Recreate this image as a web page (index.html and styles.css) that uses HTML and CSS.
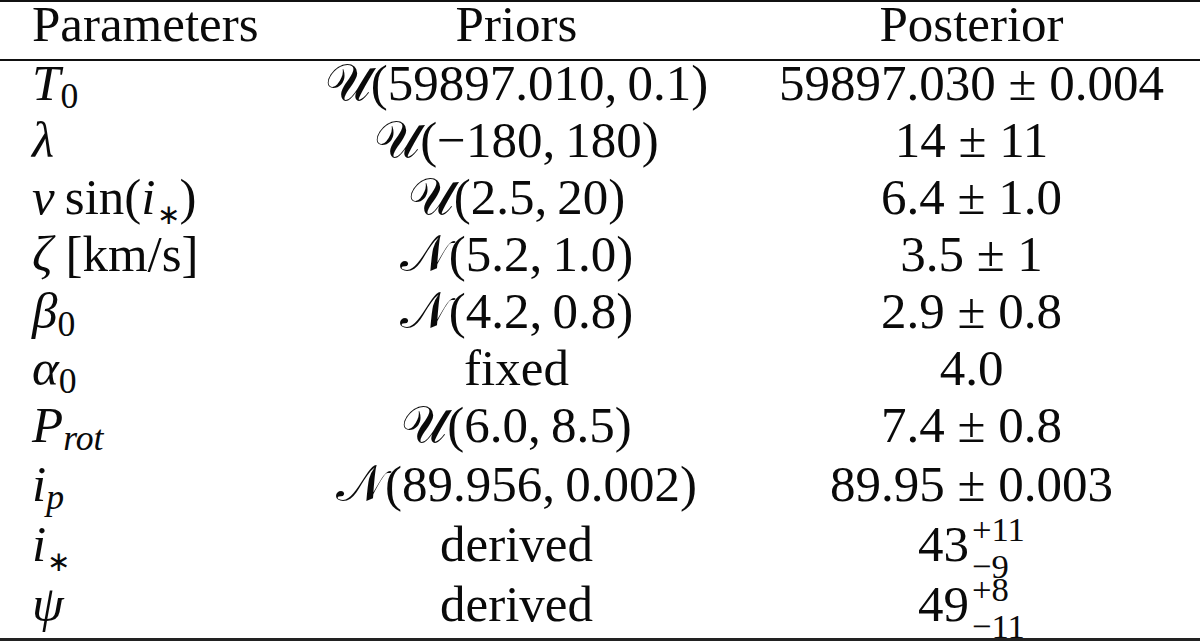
FILE: index.html
```html
<!DOCTYPE html>
<html lang="en">
  <head>
    <meta charset="UTF-8" />
    <meta name="viewport" content="width=device-width, initial-scale=1.0" />
    <title>Parameters</title>
    <link rel="stylesheet" href="styles.css">
  </head>
  <body>
    <table class="params">
      <colgroup>
        <col class="col-name">
        <col class="col-prior">
        <col class="col-post">
      </colgroup>
      <thead>
        <tr>
          <th class="name">Parameters</th>
          <th>Priors</th>
          <th>Posterior</th>
        </tr>
      </thead>
      <tbody>
        <tr>
          <td class="name"><i>T</i><sub>0</sub></td>
          <td><span class="cal">𝒰</span>(59897.010,&thinsp;0.1)</td>
          <td>59897.030 ± 0.004</td>
        </tr>
        <tr>
          <td class="name"><i>λ</i></td>
          <td><span class="cal">𝒰</span>(−180,&thinsp;180)</td>
          <td>14 ± 11</td>
        </tr>
        <tr>
          <td class="name"><i>v</i>&thinsp;sin(<i>i</i><sub class="star">∗</sub>)</td>
          <td><span class="cal">𝒰</span>(2.5,&thinsp;20)</td>
          <td>6.4 ± 1.0</td>
        </tr>
        <tr>
          <td class="name"><i>ζ</i> [km/s]</td>
          <td><span class="cal">𝒩</span>(5.2,&thinsp;1.0)</td>
          <td>3.5 ± 1</td>
        </tr>
        <tr>
          <td class="name"><i>β</i><sub>0</sub></td>
          <td><span class="cal">𝒩</span>(4.2,&thinsp;0.8)</td>
          <td>2.9 ± 0.8</td>
        </tr>
        <tr>
          <td class="name"><i>α</i><sub>0</sub></td>
          <td>fixed</td>
          <td>4.0</td>
        </tr>
        <tr class="row-59">
          <td class="name"><i>P</i><sub><i>rot</i></sub></td>
          <td><span class="cal">𝒰</span>(6.0,&thinsp;8.5)</td>
          <td>7.4 ± 0.8</td>
        </tr>
        <tr class="row-60">
          <td class="name"><i>i</i><sub><i>p</i></sub></td>
          <td><span class="cal">𝒩</span>(89.956,&thinsp;0.002)</td>
          <td>89.95 ± 0.003</td>
        </tr>
        <tr class="row-60">
          <td class="name"><i>i</i><sub class="star">∗</sub></td>
          <td>derived</td>
          <td>43<span class="scripts"><span>+11</span><span>−9</span></span></td>
        </tr>
        <tr class="last">
          <td class="name"><i>ψ</i></td>
          <td>derived</td>
          <td>49<span class="scripts"><span>+8</span><span>−11</span></span></td>
        </tr>
      </tbody>
    </table>
  </body>
</html>
```

FILE: styles.css
```css
body {
  margin: 0;
  background-color: #ffffff;
  color: #0a0a0a;
  font-family: "Liberation Serif", "Times New Roman", serif;
}

.params {
  width: 1200px;
  table-layout: fixed;
  border-collapse: separate;
  border-spacing: 0;
  font-family: "Liberation Serif", "Times New Roman", serif;
  font-size: 51px;
}

.col-name {
  width: 290px;
}

.col-prior {
  width: 453px;
}

.col-post {
  width: 457px;
}

.params th,
.params td {
  padding: 0;
  height: 57px;
  line-height: 45px;
  vertical-align: top;
  text-align: center;
  font-weight: normal;
  white-space: nowrap;
}

.params th {
  border-top: 2px solid #111;
  border-bottom: 2px solid #111;
}

.params .row-59 td {
  height: 59px;
}

.params .row-60 td {
  height: 60px;
}

.params .last td {
  height: 56px;
  border-bottom: 3px solid #222;
}

.params .name {
  text-align: left;
  padding-left: 32px;
}

sub {
  font-size: 0.7em;
  line-height: 0;
  vertical-align: -0.22em;
}

sub.star {
  font-size: 0.55em;
  vertical-align: -0.35em;
  margin-left: 1px;
}

.cal {
  font-style: normal;
}

/* верхний и нижний индексы друг над другом */
.scripts {
  display: inline-flex;
  flex-direction: column;
  font-size: 0.68em;
  line-height: 37px;
  vertical-align: 20px;
  margin: -14px 0 -20px 3px;
  text-align: left;
}
```
